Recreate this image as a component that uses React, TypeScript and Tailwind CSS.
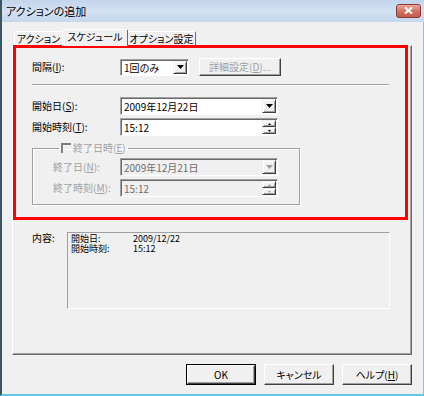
import React from 'react';

const font = "font-['Noto_Sans_CJK_JP','Liberation_Sans',sans-serif] [font-feature-settings:'palt']";

function U({ c }: { c: string }) {
  return <span className="underline underline-offset-1">{c}</span>;
}

function DropArrow({ off }: { off?: boolean }) {
  return (
    <div className="w-[14px] h-full shrink-0 flex items-center justify-center bg-[#f0f0f0] border border-t-[#f0f0f0] border-l-[#f0f0f0] border-r-[#404040] border-b-[#404040] shadow-[inset_1px_1px_0_#fff,inset_-1px_-1px_0_#a0a0a0]">
      <svg width="7" height="4" viewBox="0 0 7 4">
        <path d="M0 0h7L3.5 4z" fill={off ? '#a0a0a0' : '#000'} />
      </svg>
    </div>
  );
}

function Spin({ off }: { off?: boolean }) {
  const c = off ? '#a0a0a0' : '#000';
  return (
    <div className="w-[14px] h-full shrink-0 flex flex-col">
      {[0, 1].map((i) => (
        <div
          key={i}
          className="flex-1 flex items-center justify-center bg-[#f0f0f0] border border-t-[#f0f0f0] border-l-[#f0f0f0] border-r-[#404040] border-b-[#404040] shadow-[inset_1px_1px_0_#fff,inset_-1px_-1px_0_#a0a0a0]"
        >
          <svg width="3" height="2" viewBox="0 0 3 2">
            <path d={i === 0 ? 'M0 2h3L1.5 0z' : 'M0 0h3L1.5 2z'} fill={c} />
          </svg>
        </div>
      ))}
    </div>
  );
}

function Field({
  text,
  w,
  h = 'h-[18px]',
  off,
  kind,
}: {
  text: string;
  w: string;
  h?: string;
  off?: boolean;
  kind: 'drop' | 'spin';
}) {
  return (
    <div
      className={`${w} ${h} flex items-stretch border border-t-[#a0a0a0] border-l-[#a0a0a0] border-r-white border-b-white shadow-[inset_1px_1px_0_#696969] ${
        off ? 'bg-[#f0f0f0] text-[#6d6d6d]' : 'bg-white text-black'
      }`}
    >
      <div className="flex-1 flex items-center pl-[3px] pt-px text-[10px] leading-none whitespace-nowrap">{text}</div>
      <div className="py-px pr-px flex">{kind === 'drop' ? <DropArrow off={off} /> : <Spin off={off} />}</div>
    </div>
  );
}

function Btn({ children, def, off, w = 'w-[70px]', h = 'h-[21px]' }: { children: React.ReactNode; def?: boolean; off?: boolean; w?: string; h?: string }) {
  return (
    <div
      className={`${w} ${h} flex items-center justify-center text-[10px] leading-none whitespace-nowrap bg-[#f0f0f0] ${
        def ? 'border border-black' : ''
      } ${off ? 'text-[#a0a0a0]' : 'text-black'}`}
    >
      <div className="w-full h-full flex items-center justify-center border border-t-white border-l-white border-r-[#404040] border-b-[#404040] shadow-[inset_-1px_-1px_0_#a0a0a0]">
        {children}
      </div>
    </div>
  );
}

export default function App() {
  return (
    <div className={`w-[424px] h-[396px] flex flex-col bg-[#f0f0f0] border-l-2 border-[#3d5660] border-b-2 border-b-[#63c7e6] overflow-hidden ${font}`}>
      {/* title bar */}
      <div className="h-[22px] shrink-0 flex items-center justify-between pl-[4px] pr-[3px] bg-gradient-to-b from-[#c2d5ed] via-[#d3e1f2] to-[#c6d7ed]">
        <span className="text-[11px] leading-none text-black pt-px whitespace-nowrap">アクションの追加</span>
        <div className="w-[25px] h-[14px] mt-[-1px] rounded-[3px] border border-[#8a3a30] bg-gradient-to-b from-[#e8aaa0] via-[#d27466] to-[#c45a4a] flex items-center justify-center">
          <svg width="9" height="7" viewBox="0 0 9 7">
            <path d="M1 0.5L8 6.5M8 0.5L1 6.5" stroke="#fff" strokeWidth="2" />
          </svg>
        </div>
      </div>

      <div className="flex-1 flex flex-col border-r border-[#a9b6c4]">
        {/* tabs */}
        <div className="flex items-end pl-[12px] pt-[7px] text-[10px] leading-none text-black whitespace-nowrap">
          <div className="w-[48px] h-[14px] flex items-center justify-center border-t border-l border-white rounded-tl-[2px]">
            アクション
          </div>
          <div className="w-[66px] h-[17px] -mb-px relative z-10 bg-[#f0f0f0] flex items-center justify-center pb-[2px] border-t border-l border-white border-r border-r-[#696969] rounded-t-[2px]">
            スケジュール
          </div>
          <div className="w-[68px] h-[14px] flex items-center justify-center border-t border-white border-r border-r-[#696969] rounded-tr-[2px]">
            オプション設定
          </div>
        </div>

        {/* panel */}
        <div className="ml-[10px] w-[400px] h-[310px] border-t border-l border-white border-r border-b border-r-[#696969] border-b-[#696969] shadow-[inset_-1px_-1px_0_#a0a0a0] flex flex-col text-[10px] leading-none text-black">
          <div className="-mt-px w-[395px] h-[175px] border-[3px] border-[#ff0000] pl-[16px] pt-[10px] flex flex-col">
            <div className="flex items-center h-[18px]">
              <span className="w-[88px]">
                間隔(<U c="I" />):
              </span>
              <Field text="1回のみ" w="w-[69px]" h="h-[17px]" kind="drop" />
              <div className="ml-[10px]">
                <Btn off w="w-[82px]" h="h-[18px]">
                  詳細設定(<U c="D" />)...
                </Btn>
              </div>
            </div>

            <div className="mt-[8px] w-[357px] h-[2px] border-t border-[#a0a0a0] border-b border-b-white" />

            <div className="mt-[11px] flex items-center">
              <span className="w-[88px]">
                開始日(<U c="S" />):
              </span>
              <Field text="2009年12月22日" w="w-[158px]" kind="drop" />
            </div>
            <div className="mt-[3px] flex items-center">
              <span className="w-[88px]">
                開始時刻(<U c="T" />):
              </span>
              <Field text="15:12" w="w-[158px]" kind="spin" />
            </div>

            <fieldset className="mt-[6px] w-[268px] border border-[#a0a0a0] shadow-[inset_1px_1px_0_#fff,1px_1px_0_#fff] pl-[20px] pb-[7px] text-[#a0a0a0]">
              <legend className="ml-[6px] px-[2px] flex items-center h-[12px]">
                <span className="w-[10px] h-[10px] border-t-2 border-l-2 border-[#808080] mr-[2px]" />
                終了日時(<U c="E" />)
              </legend>
              <div className="mt-[4px] flex items-center">
                <span className="w-[67px]">
                  終了日(<U c="N" />):
                </span>
                <Field off text="2009年12月21日" w="w-[158px]" kind="drop" />
              </div>
              <div className="mt-[3px] flex items-center">
                <span className="w-[67px]">
                  終了時刻(<U c="M" />):
                </span>
                <Field off text="15:12" w="w-[158px]" kind="spin" />
              </div>
            </fieldset>
          </div>

          <div className="mt-[12px] pl-[19px] flex items-start">
            <span className="w-[35px] pt-[1px]">内容:</span>
            <div className="w-[323px] h-[77px] border border-t-[#a0a0a0] border-l-[#a0a0a0] border-r-white border-b-white pl-[3px] pt-[1px] text-[9px] leading-[10px]">
              <div className="flex">
                <span className="w-[62px]">開始日:</span>
                <span>2009/12/22</span>
              </div>
              <div className="flex">
                <span className="w-[62px]">開始時刻:</span>
                <span>15:12</span>
              </div>
            </div>
          </div>
        </div>

        {/* buttons */}
        <div className="ml-[10px] w-[400px] mt-[9px] flex justify-end gap-[8px]">
          <Btn def>OK</Btn>
          <Btn>キャンセル</Btn>
          <Btn>
            ヘルプ(<U c="H" />)
          </Btn>
        </div>
      </div>
    </div>
  );
}
